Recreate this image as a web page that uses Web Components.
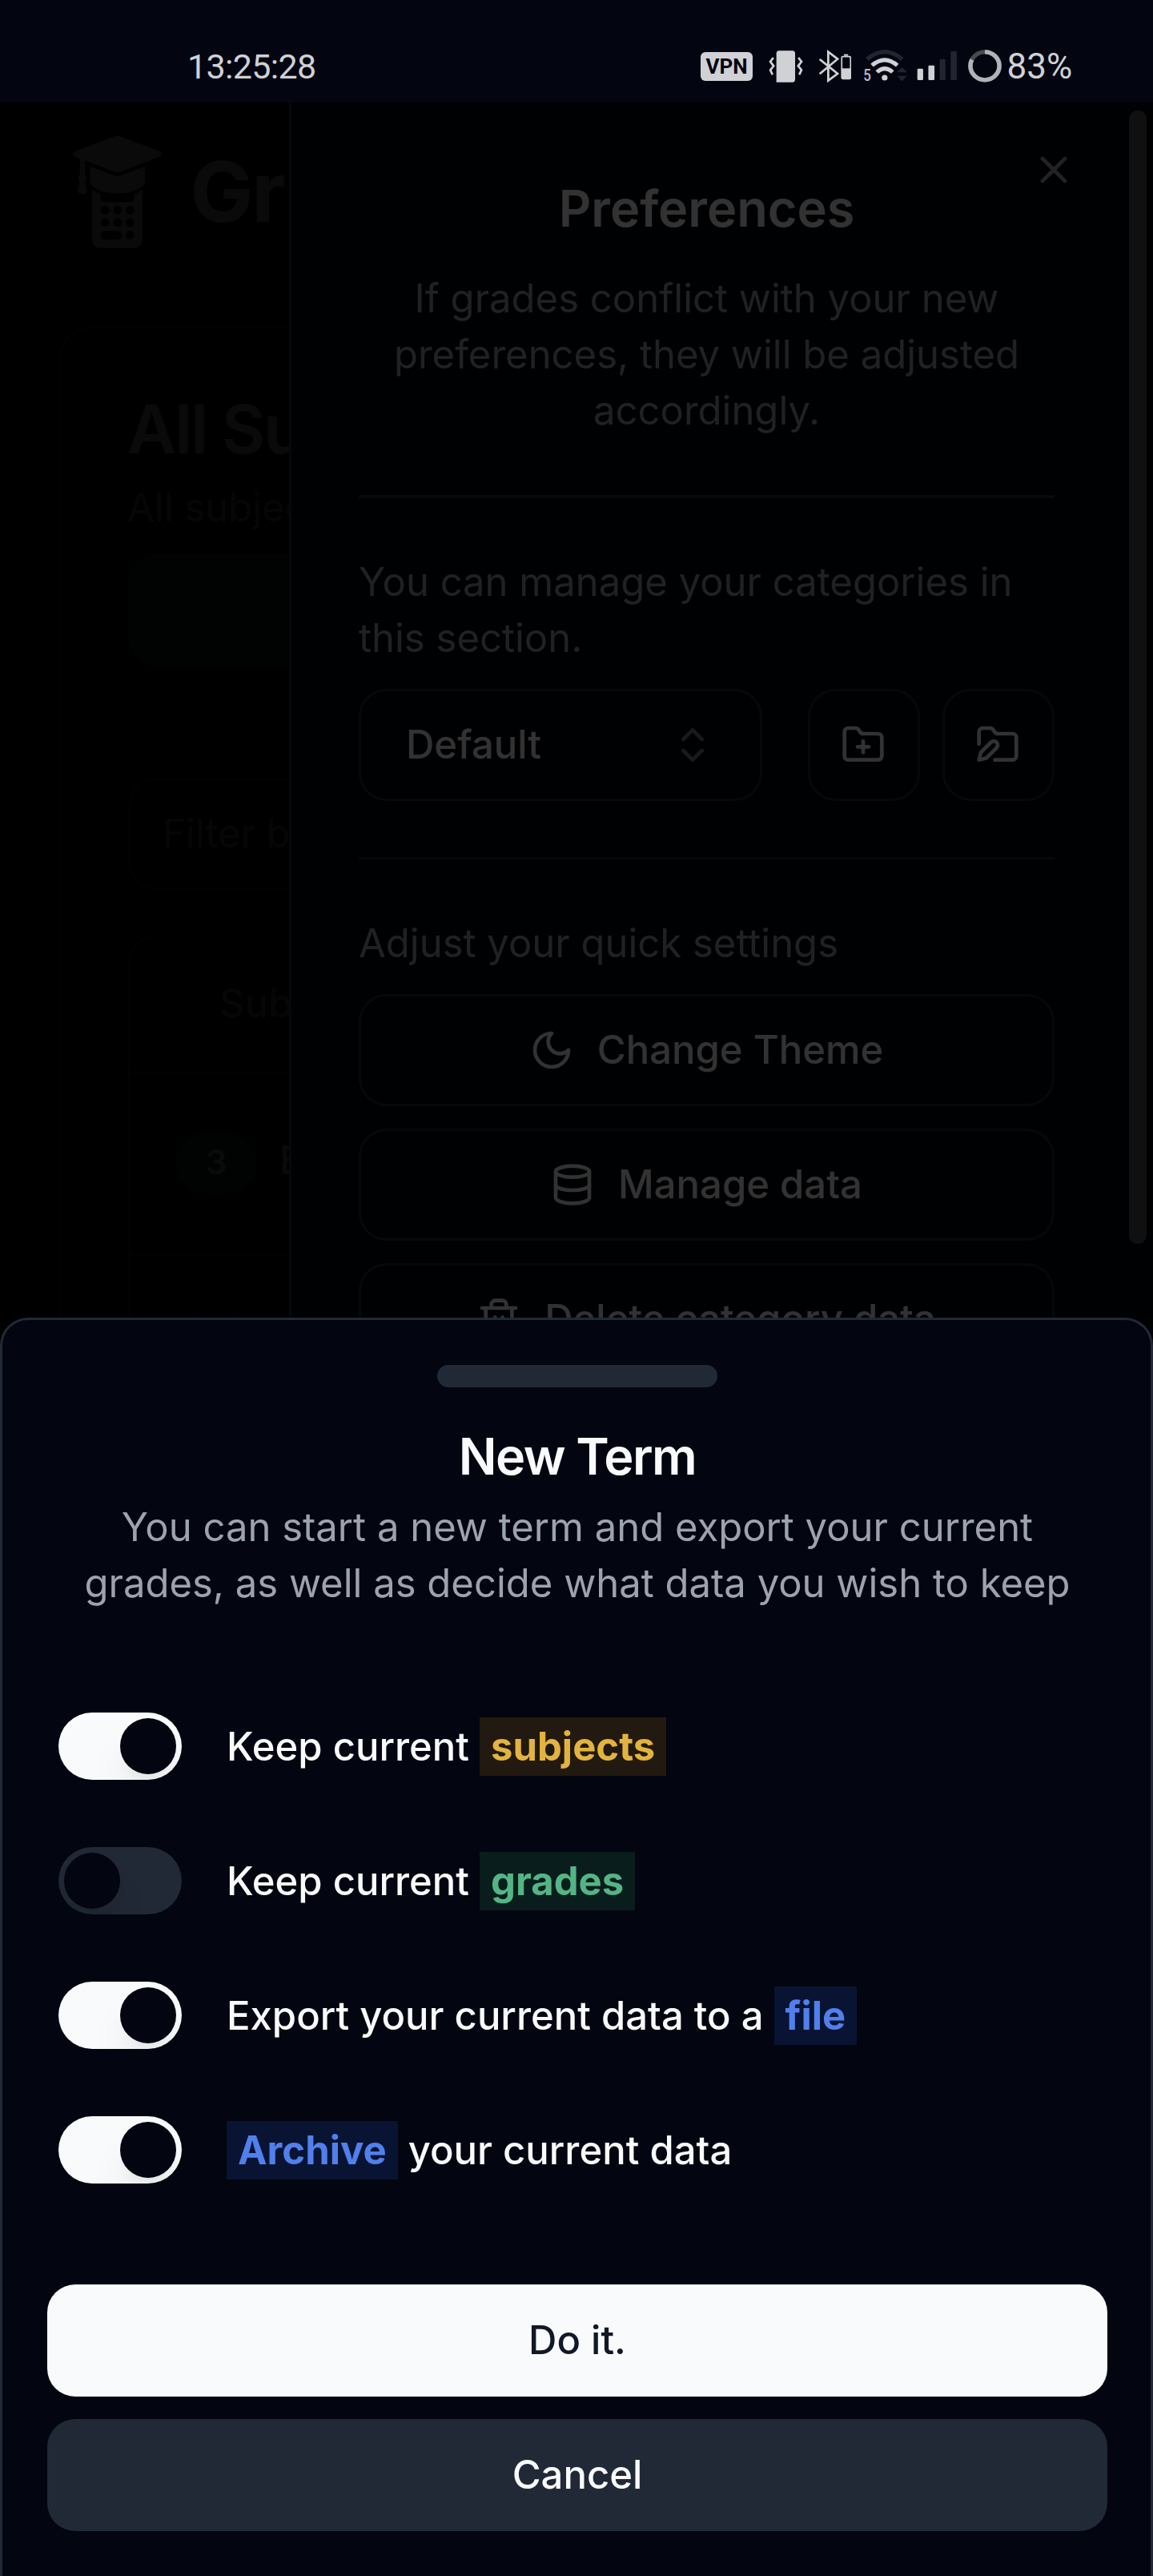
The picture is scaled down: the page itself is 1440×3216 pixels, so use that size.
<!DOCTYPE html>
<html lang="en">
<head>
<meta charset="utf-8">
<title>New Term</title>
<style>
  html, body { margin: 0; padding: 0; background: #000; }
  body { font-family: Inter, "Liberation Sans", sans-serif; font-size: 49px; line-height: 70px; color: #f9fafb; }
</style>
</head>
<body>
<phone-screen>
  <status-bar slot="status"></status-bar>
  <grades-page></grades-page>
  <page-overlay></page-overlay>
  <prefs-sheet></prefs-sheet>
  <page-overlay></page-overlay>
  <term-drawer></term-drawer>
</phone-screen>
<script>
const define = (name, html) => {
  const tpl = document.createElement('template');
  tpl.innerHTML = '<style>*{box-sizing:border-box}:host{box-sizing:border-box}</style>' + html;
  customElements.define(name, class extends HTMLElement {
    constructor() {
      super();
      this.attachShadow({ mode: 'open' }).appendChild(tpl.content.cloneNode(true));
    }
  });
};

/* Stroke icons on a 24-unit grid */
const ICONS = {
  x: '<path d="M18 6 6 18"/><path d="m6 6 12 12"/>',
  chevrons: '<path d="m7 15 5 5 5-5"/><path d="m7 9 5-5 5 5"/>',
  folderPlus: '<path d="M12 10v6"/><path d="M9 13h6"/><path d="M20 20a2 2 0 0 0 2-2V8a2 2 0 0 0-2-2h-7.9a2 2 0 0 1-1.69-.9L9.6 3.9A2 2 0 0 0 7.93 3H4a2 2 0 0 0-2 2v13a2 2 0 0 0 2 2Z"/>',
  folderPen: '<path d="M8.4 10.6a2 2 0 0 1 3 3L6 19l-4 1 1-4Z"/><path d="M2 11.5V5a2 2 0 0 1 2-2h3.9a2 2 0 0 1 1.69.9l.81 1.2a2 2 0 0 0 1.67.9H20a2 2 0 0 1 2 2v10a2 2 0 0 1-2 2h-9.5"/>',
  moon: '<path d="M12 3a6 6 0 0 0 9 9 9 9 0 1 1-9-9Z"/>',
  database: '<ellipse cx="12" cy="5" rx="9" ry="3"/><path d="M3 5V19A9 3 0 0 0 21 19V5"/><path d="M3 12A9 3 0 0 0 21 12"/>',
  trash: '<path d="M3 6h18"/><path d="M19 6v14c0 1-1 2-2 2H7c-1 0-2-1-2-2V6"/><path d="M8 6V4c0-1 1-2 2-2h4c1 0 2 1 2 2v2"/><path d="M10 11v6"/><path d="M14 11v6"/>'
};
customElements.define('ui-icon', class extends HTMLElement {
  constructor() { super(); this.attachShadow({ mode: 'open' }); }
  connectedCallback() {
    this.shadowRoot.innerHTML = `<style>:host{display:block;width:56px;height:56px;flex:none}svg{display:block}</style>
      <svg width="56" height="56" viewBox="0 0 24 24" fill="none" stroke="currentColor" stroke-width="2" stroke-linecap="round" stroke-linejoin="round">${ICONS[this.getAttribute('name')]}</svg>`;
  }
});

/* Status bar glyphs; each has its own horizontal slice of one drawing grid */
const GLYPHS = {
  vibrate: [348, 126, '<path d="M386 70H434Q444 70 444 81V177Q444 188 434 188H376V81Q376 70 386 70Z" fill="#d0d1d4"/><path d="M365 96 354 111 366 127 354 142 362 160M456 96 467 111 455 127 467 142 459 160" fill="none" stroke="#d0d1d4" stroke-width="8"/>'],
  bluetooth: [528, 120, '<path d="M533 102 598 156 564 182V74L598 101 533 157" fill="none" stroke="#d0d1d4" stroke-width="8"/><path d="M621 83H636V89H621Z" fill="#d0d1d4"/><rect x="613" y="92" width="32" height="83" rx="4" fill="none" stroke="#d0d1d4" stroke-width="5"/><path d="M612 136H646V174H612Z" fill="#d0d1d4"/>'],
  wifi: [690, 160, '<g fill="none" stroke-width="15"><path d="M704 102Q768 46 832 102" stroke="#22252f"/><path d="M722 125Q768 84 814 125" stroke="#d0d1d4"/><path d="M740 150Q768 124 797 150" stroke="#d0d1d4"/></g><circle cx="768" cy="171" r="10.5" fill="#d0d1d4"/><path d="M813 151 831 132 849 151ZM813 164 831 184 849 164Z" fill="#22252f"/><text x="691" y="183" font-family="Roboto, sans-serif" font-weight="500" font-size="62" textLength="28" lengthAdjust="spacingAndGlyphs" fill="#b9bbc0">5</text>'],
  signal: [886, 146, '<rect x="888" y="137" width="21" height="43" rx="4" fill="#d0d1d4"/><rect x="928" y="125" width="22" height="55" rx="4" fill="#d0d1d4"/><rect x="969" y="101" width="21" height="79" rx="4" fill="#22252f"/><rect x="1009" y="72" width="22" height="108" rx="4" fill="#22252f"/>'],
  ring: [1070, 122, '<g fill="none" stroke-width="16" transform="rotate(-90 1131 127)"><circle cx="1131" cy="127" r="52.5" stroke="#484a50"/><circle cx="1131" cy="127" r="52.5" stroke="#b2b3b8" pathLength="100" stroke-dasharray="82 18"/></g>']
};
customElements.define('status-glyph', class extends HTMLElement {
  constructor() { super(); this.attachShadow({ mode: 'open' }); }
  connectedCallback() {
    const [x, w, body] = GLYPHS[this.getAttribute('name')];
    this.shadowRoot.innerHTML = `<style>:host{display:block;flex:none}svg{display:block}</style>
      <svg width="${w / 2.904}" height="45" viewBox="${x} 60 ${w} 135" preserveAspectRatio="none">${body}</svg>`;
  }
});

define('status-bar', `
  <style>
    :host{display:flex;align-items:flex-start;justify-content:space-between;height:128px;background:#030510;color:#d0d1d4;
      padding:60px 100px 0 234px;font-family:Roboto,sans-serif;font-size:43px;line-height:46px}
    .time{letter-spacing:-.65px}
    .right{display:flex;align-items:flex-start;height:45px}
    .vpn{margin-top:5px;width:65px;height:36px;border-radius:6px;background:#d0d1d4;color:#030510;font-weight:700;font-size:26px;
      line-height:37px;text-align:center}
    .pct{width:82.4px;margin-left:7px;white-space:nowrap;font-size:44px}
  </style>
  <div class="time">13:25:28</div>
  <div class="right">
    <div class="vpn">VPN</div>
    <status-glyph name="vibrate" style="margin-left:20px"></status-glyph>
    <status-glyph name="bluetooth" style="margin-left:18.5px"></status-glyph>
    <status-glyph name="wifi" style="margin-left:14.5px"></status-glyph>
    <status-glyph name="signal" style="margin-left:12.5px"></status-glyph>
    <status-glyph name="ring" style="margin-left:13px"></status-glyph>
    <div class="pct">83%</div>
  </div>`);

define('phone-screen', `
  <style>
    :host{display:flex;flex-direction:column;width:1440px;height:3216px;overflow:hidden;background:#030711}
    .stage{position:relative;flex:1;overflow:hidden}
  </style>
  <slot name="status"></slot>
  <div class="stage"><slot></slot></div>`);

define('page-overlay', `<style>:host{display:block;position:absolute;inset:0;background:rgba(0,0,0,.8)}</style>`);

define('app-logo', `
  <style>:host{display:block;flex:none}svg{display:block}</style>
  <svg width="119.4" height="146.7" viewBox="190 500 260 440" preserveAspectRatio="none" fill="currentColor">
    <path d="M312 513Q320 507 328 513L436 569Q446 578 436 588L330 645Q320 651 310 645L232 603V655Q238 664 234 679Q231 686 234 695L237 716Q237 729 225 729Q212 729 212 716L216 695Q219 686 215 679Q211 664 218 655V597L203 588Q194 578 203 569Z"/>
    <path d="M245 625 310 659Q320 664 330 659L395 625V688Q376 725 320 726Q264 725 245 688Z"/>
    <path fill-rule="evenodd" d="M251 710Q260 722 274 729V745Q275 759 288 759H352Q365 759 366 745V729Q380 722 388 710V900Q386 930 366 931H273Q253 930 251 900ZM286 773a11.500 16 0 1 0 .1 0ZM320 773a11.500 16 0 1 0 .1 0ZM354 773a11.500 16 0 1 0 .1 0ZM286 820a11.500 16 0 1 0 .1 0ZM320 820a11.500 16 0 1 0 .1 0ZM354 820a11.500 16 0 1 0 .1 0ZM354 867a11.500 16 0 1 0 .1 0ZM287 867Q274 867 274 883Q274 899 287 899H318Q332 899 332 883Q332 867 318 867Z"/>
  </svg>`);

define('subject-row', `
  <style>
    :host{display:flex;align-items:center;height:227px;padding:0 0 4px 56px;border-top:3px solid #2b3b4b;gap:28px;white-space:nowrap;font-weight:500}
    .pill{width:102px;height:77px;border-radius:39px;background:#164a32;display:grid;place-items:center;font-size:42px;font-weight:600;line-height:56px}
    .name{padding-bottom:5px}
  </style>
  <span class="pill"><slot name="count"></slot></span><span class="name"><slot></slot></span>`);

define('grades-page', `
  <style>
    :host{display:block;width:1440px;height:100%;overflow:hidden;white-space:nowrap}
    header{display:flex;gap:31px;padding:38px 0 0 87px;height:279px}
    .brand{padding-top:3px;font-size:105px;font-weight:700;line-height:140px;letter-spacing:-2px}
    .card{margin:0 0 0 73px;border:3px solid #2b3b4b;border-radius:42px;height:2500px;padding:84px}
    h1{margin:0 0 0 -1px;font-size:84px;line-height:84px;font-weight:600;letter-spacing:-2.1px}
    p{margin:21px 0 22px -1px;color:#9ca3af}
    .add{height:140px;border-radius:35px;background:#164a32}
    .filter{margin-top:140px;height:140px;border:3px solid #2b3b4b;border-radius:35px;padding:32px 40px;color:#9ca3af}
    .table{margin-top:56px;border:3px solid #2b3b4b;border-radius:35px;height:800px}
    .th{height:168px;padding:48px 0 0 111px;color:#9ca3af;font-weight:500}
  </style>
  <header><app-logo></app-logo><div class="brand">Gr</div></header>
  <section class="card">
    <h1>All Su</h1>
    <p>All subjec</p>
    <div class="add"></div>
    <div class="filter">Filter b</div>
    <div class="table">
      <div class="th">Sub</div>
      <subject-row><span slot="count">3</span>E</subject-row>
      <subject-row></subject-row>
    </div>
  </section>`);

define('ui-button', `
  <style>
    :host{display:flex;align-items:center;justify-content:center;gap:28px;height:140px;border-radius:35px;font-weight:500;white-space:nowrap}
    :host([outline]){border:3px solid #1f2937}
    :host([square]){width:140px;flex:none}
    :host([primary]){background:#f9fafc;color:#111827}
    :host([secondary]){background:#212936;color:#f9fafb}
    :host([select]){justify-content:space-between;width:504px;padding:0 56px}
    :host(:not([select])) ::slotted(ui-icon){margin:0 1px 0 -1px}
  </style><slot></slot>`);

define('ui-separator', `<style>:host{display:block;height:3.5px;background:#1f2937;margin:70px 0}</style>`);

define('scroll-thumb', `<style>:host{display:block;position:absolute;right:8px;top:10px;width:22px;height:1415px;border-radius:11px;background:#525357}</style>`);

define('prefs-sheet', `
  <style>
    :host{display:block;position:absolute;top:0;bottom:0;right:0;width:1079px;background:#030711;border-left:3px solid #1f2937;padding:83px 123px 0 84px}
    .close{position:absolute;top:56px;right:96px;opacity:.7}
    h2{margin:0 0 29px;font-size:63px;line-height:98px;font-weight:600;text-align:center}
    .desc{text-align:center}
    p{margin:0;color:#9ca3af;white-space:nowrap}
    .row{display:flex;gap:28px;margin-top:28px}
    .row ui-button[select]{margin-right:29px}
    .stack{display:flex;flex-direction:column;gap:28px;margin-top:28px}
  </style>
  <div class="close"><ui-icon name="x"></ui-icon></div>
  <h2>Preferences</h2>
  <p class="desc">If grades conflict with your new<br>preferences, they will be adjusted<br>accordingly.</p>
  <ui-separator></ui-separator>
  <p>You can manage your categories in<br>this section.</p>
  <div class="row">
    <ui-button outline select>Default<ui-icon name="chevrons" style="opacity:.5"></ui-icon></ui-button>
    <ui-button outline square><ui-icon name="folderPlus"></ui-icon></ui-button>
    <ui-button outline square><ui-icon name="folderPen"></ui-icon></ui-button>
  </div>
  <ui-separator></ui-separator>
  <p>Adjust your quick settings</p>
  <div class="stack">
    <ui-button outline><ui-icon name="moon"></ui-icon>Change Theme</ui-button>
    <ui-button outline><ui-icon name="database"></ui-icon>Manage data</ui-button>
    <ui-button outline><ui-icon name="trash"></ui-icon>Delete category data</ui-button>
  </div>
  <scroll-thumb></scroll-thumb>`);

define('ui-switch', `
  <style>
    :host{display:flex;flex:none;width:154px;height:84px;border-radius:42px;padding:7px;background:#212936;overflow:hidden}
    :host([on]){background:#f9fafc;justify-content:flex-end}
    i{width:70px;height:70px;border-radius:50%;background:#030510;box-shadow:0 35px 52px -10px rgba(0,0,0,.1),0 14px 21px -14px rgba(0,0,0,.1)}
  </style><i></i>`);

define('hl-chip', `
  <style>
    :host{display:inline;padding:7px 14px;font-weight:700}
    :host([tone=amber]){background:#221a10;color:#e2b33f}
    :host([tone=green]){background:#0a1d1d;color:#54b584}
    :host([tone=blue]){background:#091433;color:#5080ec}
  </style><slot></slot>`);

define('option-row', `
  <style>
    :host{display:flex;align-items:center;gap:56px;height:84px}
    .label{font-weight:500;white-space:nowrap;padding-top:2px}
    ui-switch{display:none}
    :host([on]) .on{display:flex}
    :host(:not([on])) .off{display:flex}
  </style>
  <ui-switch class="on" on></ui-switch><ui-switch class="off"></ui-switch>
  <div class="label"><slot></slot></div>`);

define('term-drawer', `
  <style>
    :host{display:block;position:absolute;left:0;right:0;bottom:0;height:1571px;background:#030510;border:3px solid #212936;border-bottom:0;
      border-radius:35px 35px 0 0;padding:56px 54px 0 56px}
    .handle{width:350px;height:28px;border-radius:14px;background:#212936;margin:0 auto 55px}
    h2{margin:0 0 22px;font-size:63px;line-height:63px;font-weight:600;letter-spacing:-1.6px;text-align:center}
    p{margin:0;color:#9ca3af;text-align:center;white-space:nowrap}
    .options{display:flex;flex-direction:column;gap:84px;padding:126px 14px}
    .actions{display:flex;flex-direction:column;gap:28px}
  </style>
  <div class="handle"></div>
  <h2>New Term</h2>
  <p>You can start a new term and export your current<br>grades, as well as decide what data you wish to keep</p>
  <div class="options">
    <option-row on>Keep current <hl-chip tone="amber">subjects</hl-chip></option-row>
    <option-row>Keep current <hl-chip tone="green">grades</hl-chip></option-row>
    <option-row on>Export your current data to a <hl-chip tone="blue">file</hl-chip></option-row>
    <option-row on><hl-chip tone="blue">Archive</hl-chip> your current data</option-row>
  </div>
  <div class="actions">
    <ui-button primary>Do it.</ui-button>
    <ui-button secondary>Cancel</ui-button>
  </div>`);
</script>
</body>
</html>
